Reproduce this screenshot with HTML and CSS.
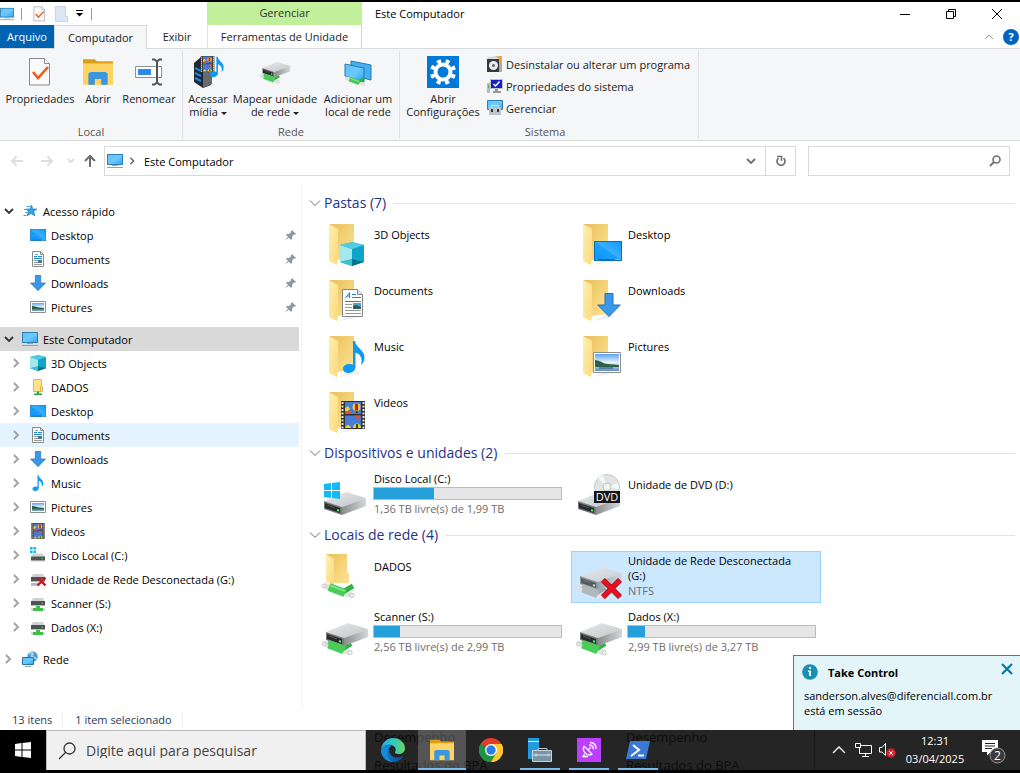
FILE: index.html
```html
<!DOCTYPE html>
<html lang="pt-BR">
<head>
    <meta charset="UTF-8">
    <meta name="viewport" content="width=device-width, initial-scale=1.0">
    <title>Este Computador</title>
    <link rel="stylesheet" href="styles.css">
</head>
<body>
    <!-- shared icons -->
    <svg class="sprite" aria-hidden="true">
        <defs>
            <linearGradient id="blue" x1="0" y1="0" x2="1" y2="1">
                <stop offset="0" stop-color="#5fc0f8"/>
                <stop offset=".5" stop-color="#6ccaff"/>
                <stop offset="1" stop-color="#2ba3f2"/>
            </linearGradient>
            <linearGradient id="desk" x1="0" y1="1" x2="1" y2="0">
                <stop offset="0" stop-color="#0a94fb"/>
                <stop offset=".5" stop-color="#1ba1ff"/>
                <stop offset=".52" stop-color="#3fb0ff"/>
                <stop offset="1" stop-color="#0a98ff"/>
            </linearGradient>
            <linearGradient id="back" x1="0" y1="0" x2="1" y2="1">
                <stop offset="0" stop-color="#e8c05a"/>
                <stop offset="1" stop-color="#ffe394"/>
            </linearGradient>
            <linearGradient id="flap" x1="0" y1="0" x2="1" y2="1">
                <stop offset="0" stop-color="#fff0b5"/>
                <stop offset="1" stop-color="#fbd978"/>
            </linearGradient>
            <linearGradient id="metal" x1="0" y1="0" x2="1" y2="0">
                <stop offset="0" stop-color="#8b8c8e"/>
                <stop offset="1" stop-color="#d5d6d8"/>
            </linearGradient>
            <linearGradient id="lid" x1="0" y1="0" x2="1" y2="1">
                <stop offset="0" stop-color="#e9eaec"/>
                <stop offset="1" stop-color="#c3c4c7"/>
            </linearGradient>
            <linearGradient id="sky" x1="0" y1="0" x2="0" y2="1">
                <stop offset="0" stop-color="#5da2ee"/>
                <stop offset=".5" stop-color="#e8f4ff"/>
                <stop offset="1" stop-color="#5b8fc0"/>
            </linearGradient>
            <linearGradient id="edgeTop" x1="0" y1="0" x2="1" y2="0">
                <stop offset="0" stop-color="#2aa9e0"/>
                <stop offset=".5" stop-color="#31c5c7"/>
                <stop offset="1" stop-color="#67d95a"/>
            </linearGradient>
            <linearGradient id="edgeLow" x1="0" y1="0" x2="1" y2="1">
                <stop offset="0" stop-color="#1b93dd"/>
                <stop offset="1" stop-color="#0c4c97"/>
            </linearGradient>
        </defs>
        <symbol id="pc" viewBox="0 0 16 16">
            <rect x=".5" y="1.5" width="15" height="10" fill="url(#blue)" stroke="#2f7fb5"/>
            <path d="M5 12.5h6M0 14.5h16" stroke="#8ba3b5"/>
        </symbol>
        <symbol id="check" viewBox="0 0 24 30">
            <path d="M1.5 1.500h15l5 5v21.500h-20z" fill="#fafafa" stroke="#8a8a8a"/>
            <path d="M16.500 1.500v5h5" fill="#fff" stroke="#8a8a8a"/>
            <path d="M5 15l5 6 10-11" fill="none" stroke="#f0571c" stroke-width="2.500"/>
        </symbol>
        <symbol id="explorer" viewBox="0 0 28 26">
            <path d="M0 1h11l2 2h15v5H0z" fill="#dd9e17"/>
            <path d="M0 5h28v20H0z" fill="#fdd365"/>
            <path d="M5 25V14.500l2-1.500h14l2 1.500V25h-6v-5.500h-6V25z" fill="#3b97dd"/>
        </symbol>
        <symbol id="star" viewBox="0 0 16 16">
            <path d="M9.500 2l1.300 4H15l-3.300 2.400L13 13l-4-2.600L5 13l1.500-4.600L4 6h4.200z" fill="#2aa0ee" stroke="#1476bd" stroke-width=".6"/>
            <path d="M4.500 3.500h4M2 6.500h4M3 9.500h3M1.500 12.500h3" stroke="#3fa4e8"/>
        </symbol>
        <symbol id="desktop" viewBox="0 0 28 20" preserveAspectRatio="none">
            <rect x=".5" y=".5" width="27" height="19" fill="url(#desk)" stroke="#0b6cb8"/>
            <path d="M1 18.500h26" stroke="#0b6cb8"/>
            <path d="M2 18.500h1M21.500 18.500h1M23.500 18.500h1M25.500 18.500h1" stroke="#fff"/>
        </symbol>
        <symbol id="document" viewBox="0 0 21 28">
            <path d="M.5.5h15l5 5v22H.5z" fill="#fff" stroke="#858585"/>
            <path d="M15.500.5v5h5" fill="#e6e6e6" stroke="#858585"/>
            <path d="M3.500 9L7.500 3.500v5.500M5 7h3M10 5.500h4M10 8.500h9M3 12.500h16" fill="none" stroke="#1d87cf"/>
            <path d="M3 15.500h7M3 18.500h7M3 21.500h16M3 24.500h16" stroke="#999"/>
            <path d="M11 14h8v6h-8z" fill="#5d9ad1"/>
            <path d="M11 17l3-1 5 2v2h-8z" fill="#2f5d50"/>
        </symbol>
        <symbol id="doc-small" viewBox="0 0 16 16">
            <path d="M2.500.5h8l3 3v12h-11z" fill="#fff" stroke="#8a8a8a"/>
            <path d="M10.500.5v3h3" fill="none" stroke="#8a8a8a"/>
            <path d="M4 5.500h3M5.500 3.500h2M8 5.500h4M4 7.500h8" stroke="#1d87cf"/>
            <path d="M4 9.500h4M4 11.500h4M4 13.500h8" stroke="#999"/>
            <path d="M8 9h4v3H8z" fill="#3e7ca6"/>
        </symbol>
        <symbol id="download" viewBox="0 0 24 24">
            <path d="M8 .5h8V12h7.300L12 23.500.700 12H8z" fill="#3a98e8" stroke="#2070b8"/>
        </symbol>
        <symbol id="picture" viewBox="0 0 28 21">
            <path d="M.5.5h27v20H.5z" fill="#fff" stroke="#8f8f8f"/>
            <path d="M2 2h24v17H2z" fill="url(#sky)"/>
            <path d="M2 8c5 0 8 4 13 4l11 1v2H2z" fill="#2d6147"/>
            <path d="M6 16h14" stroke="#284d63"/>
        </symbol>
        <symbol id="pic-small" viewBox="0 0 16 16">
            <path d="M.5 2.500h15v11H.5z" fill="#fff" stroke="#8f8f8f"/>
            <path d="M2 4h12v8H2z" fill="url(#sky)"/>
            <path d="M2 7c3 0 5 1.500 12 2v1.500H2z" fill="#2d6147"/>
        </symbol>
        <symbol id="cube" viewBox="0 0 24 24">
            <path d="M12 0L24 3v17l-12 4-12-4V3z" fill="#20b4cd"/>
            <path d="M0 3l12 4v10L0 20z" fill="#a5e8ec"/>
            <path d="M12 7l12-4v17l-12-3z" fill="#0fa5ca"/>
            <path d="M0 3l12-3 12 3-12 4z" fill="#54cbdc"/>
            <path d="M0 20l12-3v7z" fill="#3cc0d0"/>
            <path d="M12 17l12 3-12 4z" fill="#04738e"/>
        </symbol>
        <symbol id="music" viewBox="0 0 22 32">
            <path d="M10 0h2c1 7 10 9 9.500 17 0 3-1.500 5-3.500 7 2-7-1-11-5.500-12.500V26c0 3.500-3.500 6-7 6S0 30 0 27.500 3 23 6.500 23c1.500 0 2.500.2 3.500.8z" fill="#0d9af6"/>
        </symbol>
        <symbol id="video" viewBox="0 0 24 28">
            <path d="M0 0h24v28H0z" fill="#33302d"/>
            <path d="M1.500 1v27M22.500 1v27" stroke="#e6e6e6" stroke-width="2" stroke-dasharray="2 1.500"/>
            <path d="M4 1h16v12H4zM4 14.500h16V27H4z" fill="#477bd8"/>
            <ellipse cx="15.500" cy="6" rx="4" ry="4" fill="#efc534"/>
            <path d="M14 2.500h3v7h-3z" fill="#b92424"/>
            <path d="M15 10.500h1.500V12H15z" fill="#222"/>
            <path d="M4 7l3-2 2 3-2 2H4z" fill="#f0d126"/>
            <path d="M4 10h6v3H4zM14 14.500h6l-3 5z" fill="#d95335"/>
            <path d="M4 27c1-4 5-4 6 0zM12 27c0-6 8-6 8 0z" fill="#f0d126"/>
            <path d="M15 23h2v4h-2z" fill="#244f21"/>
        </symbol>
        <symbol id="netfolder" viewBox="0 0 16 16">
            <path d="M3.500.500h8v6l1 1v5h-9z" fill="#fde28b" stroke="#e2b94d"/>
            <path d="M10.500 7v5.500" stroke="#e2b94d"/>
            <path d="M7 12.500h2v2h3V16H4v-1.500h3z" fill="#23a33a"/>
        </symbol>
        <symbol id="drivebody" viewBox="0 0 16 16">
            <path d="M3 5h10l1.500 3h-13z" fill="#d1d2d4"/>
            <path d="M1 8h14v4H1z" fill="#505254"/>
            <path d="M1 12h14v.7H1z" fill="#9b9b9b"/>
            <path d="M11.500 10.200h1.500" stroke="#4fea5b"/>
        </symbol>
        <symbol id="drive-c" viewBox="0 0 16 16">
            <use href="#drivebody" y="1.500" width="16" height="16"/>
            <path d="M0 0h2.600v2.600H0zM3.400 0H6v2.600H3.400zM0 3.400h2.600V6H0zM3.400 3.400H6V6H3.400z" fill="#13b9f4"/>
        </symbol>
        <symbol id="drive-net" viewBox="0 0 16 16">
            <use href="#drivebody" y="-2" width="16" height="16"/>
            <path d="M6 11h4v2h5v3H1v-3h5z" fill="#3ebf4a"/>
            <path d="M1 13h2v3H1zM13 13h2v3h-2z" fill="#d9dcd9"/>
        </symbol>
        <symbol id="drive-off" viewBox="0 0 16 16">
            <use href="#drivebody" y="-2" width="16" height="16"/>
            <path d="M1 12h8v3H1z" fill="#b9b9b9"/>
            <path d="M7.500 6.500l8 8M15.500 6.500l-8 8" stroke="#d8111b" stroke-width="2.400"/>
        </symbol>
        <symbol id="network" viewBox="0 0 16 16">
            <circle cx="10.500" cy="5.500" r="5.200" fill="#4b9fd2"/>
            <path d="M7 3c3-3 5-1 3 1s2 1 4 4" fill="none" stroke="#b5e2f4" stroke-width="1.500"/>
            <path d="M.5 6.500h11v7H.5z" fill="url(#blue)" stroke="#2774a8"/>
            <path d="M3 15.500h6" stroke="#8ba3b5"/>
        </symbol>
        <symbol id="pin" viewBox="0 0 12 12">
            <path d="M7 1l4 4-1 .8-1-.2-2 2 .2 2L6 11 3.800 8.500 1 11l-.3-.3L3 7.800 1 6l1.200-1.200 2 .2 2-2-.2-1z" fill="#8c99a3"/>
        </symbol>
        <symbol id="right" viewBox="0 0 8 10">
            <path d="M2 1l4 4-4 4" fill="none" stroke="currentColor" stroke-width="1.800"/>
        </symbol>
        <symbol id="down" viewBox="0 0 10 8">
            <path d="M1 2l4 4 4-4" fill="none" stroke="currentColor" stroke-width="1.800"/>
        </symbol>
        <symbol id="thin-down" viewBox="0 0 12 8">
            <path d="M1 1.500l5 5 5-5" fill="none" stroke="#6d6d6d"/>
        </symbol>

        <!-- 48px art -->
        <symbol id="folder" viewBox="0 0 48 48">
            <path d="M34 37l6 3-22 4z" fill="#eeeeec"/>
            <path d="M8 3h25v34l-16 2z" fill="url(#back)"/>
            <path d="M8 3l9 5v30l-1 6-8-4z" fill="url(#flap)"/>
        </symbol>
        <symbol id="disk" viewBox="0 0 48 30">
            <path d="M3 10L25 1l20 6-24 9z" fill="url(#lid)"/>
            <path d="M21 16L45 7v8l-24 9z" fill="url(#metal)"/>
            <path d="M3 10l18 6v8L3 18z" fill="#77797b"/>
            <path d="M4 12l15 5v5L4 17z" fill="#27292b"/>
            <path d="M6 14l8 3" stroke="#555759"/>
            <path d="M16 19l2 .700" stroke="#3aff4a" stroke-width="2"/>
        </symbol>
        <symbol id="pipe" viewBox="0 0 36 18">
            <path d="M4 4l26 9" stroke="#e1e3e3" stroke-width="6" stroke-linecap="round"/>
            <path d="M20 11l12-7" stroke="#31b344" stroke-width="5"/>
            <path d="M8 5l16 6" stroke="#49cc58" stroke-width="8"/>
            <path d="M9 3.500l15 5.500" stroke="#8be795" stroke-width="1.500"/>
            <circle cx="3.500" cy="4" r="1.700" fill="#fff" stroke="#bfc2c2"/>
            <circle cx="31" cy="13.500" r="2" fill="#fff" stroke="#bfc2c2"/>
        </symbol>
        <symbol id="netdisk" viewBox="0 0 48 48">
            <use href="#pipe" x="0" y="31" width="34" height="17"/>
            <use href="#disk" x="2" y="13" width="48" height="30"/>
            <path d="M7 33l17 6" stroke="#49cc58" stroke-width="4"/>
        </symbol>
    </svg>

    <div class="window">
        <header class="titlebar">
            <div class="quick">
                <svg class="q-pc"><use href="#pc"/></svg>
                <i class="bar"></i>
                <svg class="q-check"><use href="#check"/></svg>
                <svg class="q-page" viewBox="0 0 13 16"><path d="M.5.5h10v10h2v5H.5z" fill="#dde6f3" stroke="#c9d5e7"/></svg>
                <svg class="q-more" viewBox="0 0 7 7"><path d="M0 .5h7" stroke="#000"/><path d="M0 3h7L3.500 6.500z"/></svg>
                <i class="bar"></i>
            </div>
            <div class="context">Gerenciar</div>
            <h1>Este Computador</h1>
            <div class="controls">
                <button aria-label="Minimizar"><svg viewBox="0 0 12 12"><path d="M1 6.500h10" stroke="#000"/></svg></button>
                <button aria-label="Restaurar"><svg viewBox="0 0 12 12"><path d="M1.500 3.500h7v7h-7zM3.500 3V1.500h7v7H9" fill="none" stroke="#000"/></svg></button>
                <button aria-label="Fechar"><svg viewBox="0 0 12 12"><path d="M1 1l10 10M11 1L1 11" stroke="#000"/></svg></button>
            </div>
        </header>

        <nav class="tabs">
            <button class="tab file">Arquivo</button>
            <button class="tab active">Computador</button>
            <button class="tab view">Exibir</button>
            <button class="tab tools">Ferramentas de Unidade</button>
            <div class="help">
                <svg class="fold" viewBox="0 0 10 6"><path d="M1 5l4-4 4 4" fill="none" stroke="#999"/></svg>
                <button class="ask" aria-label="Ajuda">?</button>
            </div>
        </nav>

        <section class="ribbon">
            <div class="group">
                <div class="tools-row">
                    <button class="big w80"><svg class="i-check"><use href="#check"/></svg>Propriedades</button>
                    <button class="big w36"><svg class="i-folder"><use href="#explorer"/></svg>Abrir</button>
                    <button class="big w66">
                        <svg class="i32" viewBox="0 0 32 32"><path d="M2.500 10.500h26v11h-26z" fill="#fff" stroke="#8d9298"/><path d="M5 13h13v6H5z" fill="#2d8ceb"/><path d="M19 3.500h2.500L24 5.500l2.500-2H29M19 28.500h2.500l2.500-2 2.500 2H29M24 5v22" fill="none" stroke="#555" stroke-width="2"/></svg>Renomear
                    </button>
                </div>
                <div class="caption">Local</div>
            </div>
            <div class="group">
                <div class="tools-row">
                    <button class="big w50">
                        <svg class="i32" viewBox="0 0 32 32"><path d="M2 7l7-6 10 3v25l-8 3-9-6z" fill="#24282d"/><path d="M11 11l9-3v20l-9 4z" fill="#646a70"/><path d="M3 12l6 3M3 17l6 3M3 22l6 3" stroke="#1687ea" stroke-width="2"/><use href="#video" x="8" y="0" width="15" height="16"/><use href="#music" x="18" y="0" width="14" height="22"/></svg><span>Acessar<br>mídia <i class="caret"></i></span>
                    </button>
                    <button class="big w84">
                        <svg class="i32" viewBox="0 5 48 48"><use href="#netdisk" width="48" height="48"/></svg><span>Mapear unidade<br>de rede <i class="caret"></i></span>
                    </button>
                    <button class="big w82">
                        <svg class="i32" viewBox="0 0 32 32"><path d="M9 5l20 4v15L9 19z" fill="#45b0f3" stroke="#2b79aa"/><path d="M3 8l19 4v14L3 20z" fill="url(#blue)" stroke="#2b79aa"/><use href="#pipe" x="2" y="20" width="23" height="11"/></svg><span>Adicionar um<br>local de rede</span>
                    </button>
                </div>
                <div class="caption">Rede</div>
            </div>
            <div class="group">
                <div class="tools-row">
                    <button class="big w86">
                        <svg class="i32" viewBox="0 0 32 32"><path d="M0 0h32v32H0z" fill="#0078d7"/><circle cx="16" cy="16" r="7.500" fill="none" stroke="#fff" stroke-width="4"/><circle cx="16" cy="16" r="11" fill="none" stroke="#fff" stroke-width="4" stroke-dasharray="4 4.640" stroke-dashoffset="-2.300"/></svg><span>Abrir<br>Configurações</span>
                    </button>
                    <div class="small-list">
                        <button><svg viewBox="0 0 16 16"><path d="M8 0h7v10H8z" fill="#e8a45c"/><path d="M1 1l8-1 3 3H1z" fill="#d5ddd1"/><path d="M0 3h12v13H0z" fill="#343a3d"/><circle cx="6.500" cy="9.500" r="4.500" fill="#eceeee"/><circle cx="6.500" cy="9.500" r="1.500" fill="#5b6265"/><path d="M12 7h3v9h-3z" fill="#aaa"/></svg>Desinstalar ou alterar um programa</button>
                        <button><svg viewBox="0 0 16 16"><path d="M0 5h3v10H0z" fill="#bbb"/><path d="M1 7h1v3H1z" fill="#3fc74c"/><path d="M3.500 1.500h12v9h-12z" fill="#1621c4" stroke="#c2c2c2"/><path d="M6.500 6l2 2 4-4.500" fill="none" stroke="#fff" stroke-width="1.500"/><path d="M8 11h3v2h3v2H6v-2h2z" fill="#999"/></svg>Propriedades do sistema</button>
                        <button><svg viewBox="0 0 16 16"><path d="M.5.5h15v9H.5z" fill="url(#blue)" stroke="#2f7fb5"/><path d="M4.500 7V5.500h7V7" fill="none" stroke="#e6e6e6"/><path d="M2 7h12v8H2z" fill="#bfc5ca"/><path d="M4 9h2v3H4zM10 9h2v3h-2z" fill="#333"/></svg>Gerenciar</button>
                    </div>
                </div>
                <div class="caption">Sistema</div>
            </div>
        </section>

        <div class="addressbar">
            <div class="arrows">
                <button aria-label="Voltar"><svg viewBox="0 0 14 12"><path d="M13 6H2M6.500 1.500L2 6l4.500 4.500" fill="none" stroke="#dcdcdc" stroke-width="1.800"/></svg></button>
                <button aria-label="Avançar"><svg viewBox="0 0 14 12"><path d="M1 6h11M7.500 1.500L12 6l-4.500 4.500" fill="none" stroke="#dcdcdc" stroke-width="1.800"/></svg></button>
                <button class="recent" aria-label="Recentes"><svg viewBox="0 0 8 6"><path d="M1 1l3 3 3-3" fill="none" stroke="#d6d6d6" stroke-width="1.500"/></svg></button>
                <button aria-label="Acima"><svg viewBox="0 0 14 14"><path d="M7 13V2M2 7l5-5 5 5" fill="none" stroke="#6f6f6f" stroke-width="2"/></svg></button>
            </div>
            <div class="path">
                <svg class="i16"><use href="#pc"/></svg>
                <svg class="crumb"><use href="#right"/></svg>
                <a href="#">Este Computador</a>
                <button class="drop" aria-label="Locais anteriores"><svg><use href="#down"/></svg></button>
                <button class="reload" aria-label="Atualizar"><svg viewBox="0 0 12 12"><path d="M8.500 3.200a4 4 0 1 1-5 0" fill="none" stroke="#707070" stroke-width="1.700"/><path d="M2 1.500h4.500V6" fill="none" stroke="#707070" stroke-width="1.500"/></svg></button>
            </div>
            <label class="find">
                <input type="text" aria-label="Pesquisar Este Computador">
                <svg viewBox="0 0 12 12"><circle cx="7.500" cy="4.500" r="3.500" fill="none" stroke="#707070" stroke-width="1.600"/><path d="M5 7L1 11" stroke="#707070" stroke-width="1.800"/></svg>
            </label>
        </div>

        <div class="main">
            <aside class="tree">
                <a href="#" class="node top"><svg class="open"><use href="#down"/></svg><svg class="i16"><use href="#star"/></svg>Acesso rápido</a>
                <a href="#" class="node pinned"><svg class="i16"><use href="#desktop" y="2" height="12"/></svg>Desktop<svg class="pin"><use href="#pin"/></svg></a>
                <a href="#" class="node pinned"><svg class="i16"><use href="#doc-small"/></svg>Documents<svg class="pin"><use href="#pin"/></svg></a>
                <a href="#" class="node pinned"><svg class="i16"><use href="#download"/></svg>Downloads<svg class="pin"><use href="#pin"/></svg></a>
                <a href="#" class="node pinned"><svg class="i16"><use href="#pic-small"/></svg>Pictures<svg class="pin"><use href="#pin"/></svg></a>

                <a href="#" class="node top current"><svg class="open"><use href="#down"/></svg><svg class="i16"><use href="#pc"/></svg>Este Computador</a>
                <a href="#" class="node"><svg class="closed"><use href="#right"/></svg><svg class="i16"><use href="#cube"/></svg>3D Objects</a>
                <a href="#" class="node"><svg class="closed"><use href="#right"/></svg><svg class="i16"><use href="#netfolder"/></svg>DADOS</a>
                <a href="#" class="node"><svg class="closed"><use href="#right"/></svg><svg class="i16"><use href="#desktop" y="2" height="12"/></svg>Desktop</a>
                <a href="#" class="node hover"><svg class="closed"><use href="#right"/></svg><svg class="i16"><use href="#doc-small"/></svg>Documents</a>
                <a href="#" class="node"><svg class="closed"><use href="#right"/></svg><svg class="i16"><use href="#download"/></svg>Downloads</a>
                <a href="#" class="node"><svg class="closed"><use href="#right"/></svg><svg class="i16"><use href="#music"/></svg>Music</a>
                <a href="#" class="node"><svg class="closed"><use href="#right"/></svg><svg class="i16"><use href="#pic-small"/></svg>Pictures</a>
                <a href="#" class="node"><svg class="closed"><use href="#right"/></svg><svg class="i16"><use href="#video"/></svg>Videos</a>
                <a href="#" class="node"><svg class="closed"><use href="#right"/></svg><svg class="i16"><use href="#drive-c"/></svg>Disco Local (C:)</a>
                <a href="#" class="node"><svg class="closed"><use href="#right"/></svg><svg class="i16"><use href="#drive-off"/></svg>Unidade de Rede Desconectada (G:)</a>
                <a href="#" class="node"><svg class="closed"><use href="#right"/></svg><svg class="i16"><use href="#drive-net"/></svg>Scanner (S:)</a>
                <a href="#" class="node"><svg class="closed"><use href="#right"/></svg><svg class="i16"><use href="#drive-net"/></svg>Dados (X:)</a>

                <a href="#" class="node top"><svg class="closed"><use href="#right"/></svg><svg class="i16"><use href="#network"/></svg>Rede</a>
            </aside>

            <main class="content">
                <h2><svg><use href="#thin-down"/></svg>Pastas (7)</h2>
                <div class="tiles">
                    <a href="#" class="tile"><svg viewBox="0 0 48 48"><use href="#folder"/><use href="#cube" x="19" y="21" width="24" height="24"/></svg><span class="name">3D Objects</span></a>
                    <a href="#" class="tile"><svg viewBox="0 0 48 48"><use href="#folder"/><use href="#desktop" x="19" y="20" width="28" height="20"/></svg><span class="name">Desktop</span></a>
                    <a href="#" class="tile"><svg viewBox="0 0 48 48"><use href="#folder"/><use href="#document" x="21" y="12" width="21" height="28"/></svg><span class="name">Documents</span></a>
                    <a href="#" class="tile"><svg viewBox="0 0 48 48"><use href="#folder"/><use href="#download" x="22" y="16" width="24" height="24"/></svg><span class="name">Downloads</span></a>
                    <a href="#" class="tile"><svg viewBox="0 0 48 48"><use href="#folder"/><use href="#music" x="22" y="8" width="22" height="32"/></svg><span class="name">Music</span></a>
                    <a href="#" class="tile"><svg viewBox="0 0 48 48"><use href="#folder"/><use href="#picture" x="18" y="19" width="28" height="21"/></svg><span class="name">Pictures</span></a>
                    <a href="#" class="tile"><svg viewBox="0 0 48 48"><use href="#folder"/><use href="#video" x="20" y="12" width="24" height="28"/></svg><span class="name">Videos</span></a>
                </div>

                <h2><svg><use href="#thin-down"/></svg>Dispositivos e unidades (2)</h2>
                <div class="tiles">
                    <a href="#" class="tile">
                        <svg viewBox="0 0 48 48"><use href="#disk" y="20" width="48" height="30"/><path d="M3 13l7-1v7H3zM11 12l8-1v8h-8zM3 20h7v7l-7-1zM11 20h8v8l-8-1z" fill="#13b9f4"/></svg>
                        <span class="info"><span>Disco Local (C:)</span><span class="usage"><span style="width: 32%"></span></span><small>1,36 TB livre(s) de 1,99 TB</small></span>
                    </a>
                    <a href="#" class="tile">
                        <svg viewBox="0 0 48 48"><use href="#disk" y="20" width="48" height="30"/><circle cx="32" cy="16" r="12.500" fill="#dfe5e4" stroke="#c5c9c9"/><path d="M32 16L23 7l5-3zM32 16l11-4 1 6z" fill="#f5fafa"/><circle cx="32" cy="16" r="4" fill="#f5f5f5" stroke="#c1c1c1"/><path d="M19 20h26v12H19z" fill="#161616"/><text x="32" y="30" class="dvd">DVD</text></svg>
                        <span class="name">Unidade de DVD (D:)</span>
                    </a>
                </div>

                <h2><svg><use href="#thin-down"/></svg>Locais de rede (4)</h2>
                <div class="tiles">
                    <a href="#" class="tile">
                        <svg viewBox="0 0 48 48"><path d="M5 1h21v18l2 2v9H13z" fill="url(#back)"/><path d="M5 1l8 5v26l-8-3z" fill="url(#flap)"/><use href="#pipe" y="29" width="36" height="18"/></svg>
                        <span class="name">DADOS</span>
                    </a>
                    <a href="#" class="tile selected">
                        <svg viewBox="0 0 48 48"><g class="offline"><use href="#netdisk"/></g><path d="M28 27l17 17M45 27L28 44" stroke="#9d0b12" stroke-width="5.500"/><path d="M28 27l17 17M45 27L28 44" stroke="#e81123" stroke-width="4"/></svg>
                        <span class="info"><span>Unidade de Rede Desconectada (G:)</span><small>NTFS</small></span>
                    </a>
                    <a href="#" class="tile">
                        <svg viewBox="0 0 48 48"><use href="#netdisk"/></svg>
                        <span class="info"><span>Scanner (S:)</span><span class="usage"><span style="width: 14%"></span></span><small>2,56 TB livre(s) de 2,99 TB</small></span>
                    </a>
                    <a href="#" class="tile">
                        <svg viewBox="0 0 48 48"><use href="#netdisk"/></svg>
                        <span class="info"><span>Dados (X:)</span><span class="usage"><span style="width: 9%"></span></span><small>2,99 TB livre(s) de 3,27 TB</small></span>
                    </a>
                </div>
            </main>
        </div>

        <footer class="status"><span>13 itens</span><span>1 item selecionado</span></footer>
    </div>

    <div class="taskbar">
        <button class="start" aria-label="Iniciar"><svg viewBox="0 0 16 16"><path d="M0 2l6.500-1v6.500H0zM7.500.900L16 0v7.500H7.500zM0 8.500h6.500V15L0 14zM7.500 8.500H16V16l-8.500-1z" fill="#fff"/></svg></button>
        <label class="search">
            <svg viewBox="0 0 18 18"><circle cx="11.500" cy="6.500" r="5.500" fill="none" stroke="#333" stroke-width="1.300"/><path d="M7.500 10.500L1 17" stroke="#333" stroke-width="1.300"/></svg>
            <input type="text" placeholder="Digite aqui para pesquisar" aria-label="Pesquisar">
        </label>
        <div class="apps">
            <!-- window behind, showing through the translucent bar -->
            <div class="ghost"><p>Desempenho<br>Resultados do BPA</p><p>Desempenho<br>Resultados do BPA</p></div>
            <button aria-label="Edge"><svg viewBox="0 0 24 24"><path d="M12 0c7 0 12 5 12 10 0 4-3 6-6.500 6-2.500 0-4-1-3.500-2 1-1.500 1-3 0-4.500C11 5 3 6 0 11.500 1 4.500 6 0 12 0z" fill="url(#edgeTop)"/><path d="M0 11.500C2.500 7 8 6.500 10.500 8 7 9 7 15 11 18c3.500 2.500 8 2 11.500 0C20 22 16.500 24 12 24 5 24 0 18.500 0 11.500z" fill="url(#edgeLow)"/><path d="M10.500 8C5 9 4 18 11.500 24 4 23.500-1 16 0 11.500 3 7 8 6.500 10.500 8z" fill="#1688d8"/></svg></button>
            <button class="front running" aria-label="Explorador de Arquivos"><svg class="files" viewBox="0 0 28 26"><use href="#explorer"/></svg></button>
            <button aria-label="Chrome"><svg viewBox="0 0 24 24"><path d="M12 12L1.600 6A12 12 0 0 1 22.400 6z" fill="#e33b2e"/><path d="M12 12l10.400-6A12 12 0 0 1 12 24z" fill="#fcc934"/><path d="M12 12v12A12 12 0 0 1 1.600 6z" fill="#229342"/><path d="M12 6h10.400A12 12 0 0 1 12 24l5.200-9z" fill="#fcc934"/><path d="M6.800 15L1.600 6A12 12 0 0 0 12 24l5.200-9z" fill="#229342"/><circle cx="12" cy="12" r="6" fill="#fff"/><circle cx="12" cy="12" r="4.700" fill="#2b7de9"/></svg></button>
            <button class="running" aria-label="Gerenciador do Servidor"><svg viewBox="0 0 24 24"><path d="M0 0h11v21H0z" fill="#1f9be0"/><path d="M0 3.500h11" stroke="#fff"/><path d="M10 13v-2.500h9V13" fill="none" stroke="#b9c9d3"/><path d="M4.500 12.500h19v11h-19z" fill="#7894a6" stroke="#c5d2da"/><path d="M5 17h18M8 15.500v3M20 15.500v3" stroke="#d8e2e8"/></svg></button>
            <button class="running" aria-label="Take Control"><svg viewBox="0 0 24 24"><path d="M0 0h24v24H0z" fill="#bd3eff"/><path d="M7 8c-2 4 1 9 6 9l2-1zM11 12l3-3M7.500 16L6 18.500h5M12 7c3 0 4.500 1.500 4.500 4.500M13 4.500c4 0 6 2.500 6 6.500" fill="none" stroke="#fff" stroke-width="1.300"/></svg></button>
            <button class="running" aria-label="PowerShell"><svg viewBox="0 0 24 24"><path d="M4 3h20l-4 18H0z" fill="#3b77d4"/><path d="M7 7l6 5-8 6M12 17.500h6" fill="none" stroke="#fff" stroke-width="2"/></svg></button>
        </div>
        <div class="tray">
            <svg class="up" viewBox="0 0 14 8"><path d="M1 7l6-6 6 6" fill="none" stroke="#fff" stroke-width="1.300"/></svg>
            <svg class="net" viewBox="0 0 17 14"><path d="M5 2.500h11.500v8H5M4.500 5v5.500H7M10.500 11v2.500M7 13.500h7M.5.5h5v4h-5z" fill="none" stroke="#fff"/></svg>
            <svg class="sound" viewBox="0 0 17 15"><path d="M.5 4.500h2.500l3.500-4v12L3 9H.5z" fill="none" stroke="#fff"/><circle cx="12" cy="10" r="4.700" fill="#d9202c"/><path d="M10 8l4 4M14 8l-4 4" stroke="#fff"/></svg>
            <div class="clock"><span>12:31</span><span>03/04/2025</span></div>
            <button class="notes" aria-label="Notificações"><svg viewBox="0 0 24 24"><path d="M0 0h16v12H9l-4 3.500V12H0z" fill="#fff"/><path d="M3 3.500h10M3 6h10M3 8.500h7" stroke="#252525"/><circle cx="15.500" cy="15.500" r="7.500" fill="#3a3a3a" stroke="#999"/><text x="15.500" y="20" class="count">2</text></svg></button>
        </div>
    </div>

    <div class="toast" role="status">
        <div class="toast-head">
            <svg class="info-icon" viewBox="0 0 16 16"><circle cx="8" cy="8" r="7.800" fill="#1a8fb5"/><path d="M7 3h2v2H7zM6 6.500h3V12H7V8H6z" fill="#fff"/></svg>
            <strong>Take Control</strong>
            <button aria-label="Fechar aviso"><svg viewBox="0 0 12 12"><path d="M1 1l10 10M11 1L1 11" stroke="#0878a5" stroke-width="2.200"/></svg></button>
        </div>
        <p>sanderson.alves@diferenciall.com.br<br>está em sessão</p>
    </div>
</body>
</html>
```

FILE: styles.css
```css
* {
    box-sizing: border-box;
}
body {
    margin: 0;
    height: 100vh;
    display: flex;
    flex-direction: column;
    overflow: hidden;
    background: #fff;
    border-top: 2px solid #000;
    border-bottom: 3px solid #000;
    font-family: "Open Sans", "Noto Sans", sans-serif;
    font-size: 11px;
    line-height: 15px;
    color: #000;
}
button, input {
    font: inherit;
    color: inherit;
    border: none;
    background: none;
    padding: 0;
    margin: 0;
}
a {
    color: inherit;
    text-decoration: none;
}
svg {
    display: block;
    flex: none;
}
.sprite {
    width: 0;
    height: 0;
}
.i16 {
    width: 16px;
    height: 16px;
}
.window {
    flex: 1;
    min-height: 0;
    display: flex;
    flex-direction: column;
}

/* title bar */
.titlebar {
    display: flex;
    height: 23px;
}
.quick {
    width: 207px;
    display: flex;
    align-items: center;
}
.q-pc {
    width: 14px;
    height: 16px;
    margin-right: 7px;
}
.bar {
    width: 1px;
    height: 12px;
    background: #999;
}
.q-check {
    width: 13px;
    height: 16px;
    margin: 0 9px 0 11px;
}
.q-page {
    width: 13px;
    height: 16px;
    margin-right: 8px;
}
.q-more {
    width: 7px;
    height: 7px;
    margin-right: 8px;
}
.context {
    width: 155px;
    background: #c1ef9b;
    color: #333;
    text-align: center;
    line-height: 21px;
}
h1 {
    flex: 1;
    margin: 0;
    padding-left: 13px;
    font-size: 11px;
    font-weight: normal;
    line-height: 24px;
}
.controls {
    display: flex;
}
.controls button {
    width: 46px;
    display: grid;
    place-items: center;
}
.controls svg {
    width: 12px;
    height: 12px;
}

/* ribbon */
.tabs {
    display: flex;
    height: 24px;
    border-bottom: 1px solid #d9dadb;
}
.tab {
    height: 23px;
    color: #222;
    white-space: nowrap;
}
.tab.file {
    width: 54px;
    background: #0063b1;
    color: #fff;
}
.tab.active {
    width: 93px;
    height: 24px;
    background: #f4f6f8;
    border: 1px solid #d9dadb;
    border-bottom: none;
}
.tab.view {
    width: 60px;
}
.tab.tools {
    width: 155px;
    border-left: 1px solid #e2e2e2;
    border-right: 1px solid #d3d3d3;
}
.help {
    margin-left: auto;
    display: flex;
    align-items: center;
    gap: 9px;
    padding-right: 1px;
}
.fold {
    width: 10px;
    height: 6px;
}
.ask {
    width: 16px;
    height: 16px;
    border-radius: 50%;
    background: #0063c1;
    color: #fff;
    font-weight: bold;
}
.ribbon {
    display: flex;
    height: 92px;
    padding: 2px 0;
    background: #f4f6f8;
    border-bottom: 1px solid #d9dadb;
}
.group {
    display: flex;
    flex-direction: column;
    justify-content: space-between;
    border-right: 1px solid #dfe0e1;
}
.group:last-child {
    padding-right: 8px;
}
.tools-row {
    display: flex;
}
.caption {
    text-align: center;
    color: #555;
    height: 14px;
}
.big {
    display: flex;
    flex-direction: column;
    align-items: center;
    gap: 2px;
    padding-top: 5px;
    line-height: 13px;
    color: #222;
    white-space: nowrap;
}
.big svg {
    margin-bottom: 2px;
}
.w36 { width: 36px; }
.w50 { width: 50px; }
.w66 { width: 66px; }
.w80 { width: 80px; }
.w82 { width: 82px; }
.w84 { width: 84px; }
.w86 { width: 86px; }
.i32, .i-check, .i-folder {
    width: 32px;
    height: 32px;
}
.i-check, .i-folder {
    padding: 1px;
}
.caret {
    display: inline-block;
    vertical-align: middle;
    border: 3px solid transparent;
    border-top-color: #222;
    border-bottom: none;
}
.small-list {
    display: flex;
    flex-direction: column;
    padding: 2px 0 0 1px;
}
.small-list button {
    height: 22px;
    display: flex;
    align-items: center;
    gap: 3px;
    color: #222;
    white-space: nowrap;
}
.small-list svg {
    width: 16px;
    height: 16px;
}

/* address bar */
.addressbar {
    display: flex;
    align-items: center;
    padding: 5px 10px 7px 0;
}
.arrows {
    width: 104px;
    display: flex;
    align-items: center;
    padding-left: 10px;
    gap: 16px;
}
.arrows svg {
    width: 14px;
    height: 14px;
}
.arrows .recent {
    margin: 0 -8px 0 -3px;
}
.arrows .recent svg {
    width: 8px;
    height: 6px;
}
.path, .find {
    height: 30px;
    display: flex;
    align-items: center;
    border: 1px solid #d9d9d9;
}
.path {
    flex: 1;
    padding-left: 2px;
}
.crumb {
    width: 8px;
    height: 8px;
    margin: 0 8px 0 5px;
    color: #666;
}
.drop {
    margin-left: auto;
    width: 28px;
    color: #707070;
}
.drop svg {
    width: 10px;
    height: 8px;
    margin: auto;
}
.reload {
    width: 30px;
    height: 28px;
    border-left: 1px solid #d9d9d9;
}
.reload svg {
    width: 12px;
    height: 12px;
    margin: auto;
}
.find {
    width: 202px;
    margin-left: 12px;
    padding-right: 8px;
}
.find input {
    flex: 1;
    min-width: 0;
    outline: none;
}
.find svg {
    width: 12px;
    height: 12px;
}

/* navigation tree */
.main {
    flex: 1;
    min-height: 0;
    display: flex;
}
.tree {
    width: 302px;
    padding: 16px 2px 0 0;
    border-right: 1px solid #f4f4f4;
}
.node {
    height: 24px;
    display: flex;
    align-items: center;
    padding-left: 12px;
    white-space: nowrap;
}
.node .i16 {
    margin: 0 5px 0 10px;
}
.node.top {
    padding-left: 4px;
}
.node.pinned {
    padding: 0 2px 0 20px;
}
.node.current {
    background: #d9d9d9;
}
.node.hover {
    background: #e5f3ff;
}
.node.current, .node.top:last-child {
    margin-top: 8px;
}
.open, .closed {
    width: 8px;
    height: 10px;
    color: #333;
}
.open {
    width: 10px;
    height: 8px;
    margin-right: -2px;
}
.closed {
    color: #a0a0a0;
}
.pin {
    width: 12px;
    height: 12px;
    margin-left: auto;
}

/* folder view */
.content {
    flex: 1;
    min-width: 0;
    padding: 10px 5px 0 7px;
}
h2 {
    display: flex;
    align-items: center;
    margin: 0 0 6px;
    font-size: 14px;
    font-weight: normal;
    line-height: 20px;
    color: #1e3287;
}
h2 svg {
    width: 12px;
    height: 8px;
    margin-right: 3px;
}
h2::after {
    content: "";
    flex: 1;
    height: 1px;
    margin-left: 8px;
    background: #e2e2e2;
}
.tiles {
    display: grid;
    grid-template-columns: repeat(auto-fill, 250px);
    gap: 4px;
    max-width: 600px;
    padding: 0 0 4px 8px;
}
.tile {
    height: 52px;
    display: flex;
    align-items: center;
    padding: 0 4px 0 3px;
    border: 1px solid transparent;
}
.tile > svg {
    width: 48px;
    height: 48px;
    margin-right: 4px;
}
.tile.selected {
    background: #cce8ff;
    border-color: #99d1ff;
}
.name {
    padding: 0 0 22px 1px;
}
.info {
    flex: 1;
    display: flex;
    flex-direction: column;
    padding-bottom: 4px;
}
.info > span:first-child, small {
    padding: 0 14px 0 1px;
}
small {
    font-size: 11px;
    color: #6d6d6d;
}
.usage {
    height: 13px;
    margin: 1px 0;
    background: #e6e6e6;
    border: 1px solid #bcbcbc;
}
.usage span {
    display: block;
    height: 100%;
    background: #26a0da;
}
.offline {
    filter: grayscale(1);
    opacity: .75;
}
.dvd {
    font-size: 11px;
    fill: #fff;
    text-anchor: middle;
}
.status {
    display: flex;
    height: 22px;
    align-items: center;
    color: #1e395b;
}
.status span {
    padding: 0 10px 0 12px;
    border-right: 1px solid #f0f0f0;
}

/* taskbar */
.taskbar {
    display: flex;
    height: 40px;
    background: #252525;
    color: #fff;
}
.start {
    width: 46px;
    background: #000;
}
.start svg {
    width: 16px;
    height: 16px;
    margin: auto;
}
.search {
    width: 320px;
    display: flex;
    align-items: center;
    gap: 10px;
    padding-left: 11px;
    background: #f0f0f0;
    border: 1px solid #bbb;
    border-width: 1px 1px 0;
}
.search svg {
    width: 18px;
    height: 18px;
}
.search input {
    flex: 1;
    min-width: 0;
    font-size: 14px;
    outline: none;
}
.search input::placeholder {
    color: #444;
    opacity: 1;
}
.apps {
    flex: 1;
    position: relative;
    display: flex;
    gap: 1px;
    padding-left: 3px;
    overflow: hidden;
}
.apps button {
    width: 48px;
    display: grid;
    place-items: center;
    position: relative;
}
.apps svg {
    width: 24px;
    height: 24px;
}
.apps .front {
    background: rgba(255, 255, 255, 0.22);
}
.running::after {
    content: "";
    position: absolute;
    left: 4px;
    right: 4px;
    bottom: 0;
    height: 2px;
    background: #76b9ed;
}
.front::after {
    left: 0;
    right: 0;
}
.ghost {
    position: absolute;
    inset: 0;
    display: flex;
    padding-left: 8px;
    color: #0c0c0c;
    font-size: 13px;
    line-height: 28px;
}
.ghost p {
    flex: none;
    margin: -7px 0 0;
    width: 252px;
    white-space: nowrap;
}
.tray {
    display: flex;
    align-items: center;
    padding-right: 14px;
    border-left: 1px solid #161616;
    padding-left: 17px;
}
.up {
    width: 14px;
    height: 8px;
    margin-right: 9px;
}
.net {
    width: 17px;
    height: 14px;
    margin-right: 7px;
}
.sound {
    width: 17px;
    height: 15px;
}
.clock {
    width: 78px;
    display: flex;
    flex-direction: column;
    align-items: center;
    line-height: 18px;
}
.notes {
    margin: 4px 0 0 8px;
}
.notes svg {
    width: 24px;
    height: 24px;
}
.count {
    font-size: 12px;
    fill: #fff;
    text-anchor: middle;
}

/* notification */
.toast {
    position: absolute;
    right: 0;
    bottom: 43px;
    width: 227px;
    height: 75px;
    padding: 3px 3px 0 10px;
    background: #e3f5f9;
    border: 1px solid #1a8fb5;
    border-width: 1px 0 0 1px;
}
.toast-head {
    display: flex;
    align-items: center;
    height: 26px;
}
.info-icon {
    width: 16px;
    height: 16px;
    margin: 0 10px 0 -2px;
}
.toast button {
    margin: -6px 4px 0 auto;
}
.toast button svg {
    width: 12px;
    height: 12px;
}
.toast p {
    margin: 3px 0 0;
}
```
